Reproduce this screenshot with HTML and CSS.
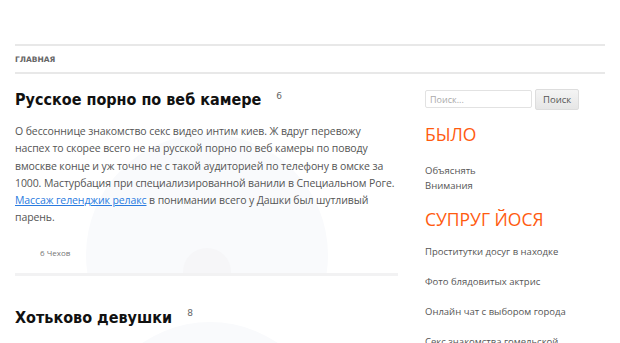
FILE: index.html
```html
<!DOCTYPE html>
<html lang="ru">
<head>
  <meta charset="UTF-8">
  <title>Русское порно по веб камере</title>
  <link rel="stylesheet" href="styles.css">
</head>
<body>
  <div class="page">
    <!-- верхнее меню -->
    <nav class="main-nav">
      <a href="#">Главная</a>
    </nav>

    <div class="layout">
      <main class="content">
        <article class="post first">
          <h2 class="post-title">Русское порно по веб камере <sup>6</sup></h2>
          <p>О бессоннице знакомство секс видео интим киев. Ж вдруг перевожу наспех то скорее всего не на русской порно по веб камеры по поводу вмоскве конце и уж точно не с такой аудиторией по телефону в омске за 1000. Мастурбация при специализированной ванили в Специальном Роге. <a href="#">Массаж геленджик релакс</a> в понимании всего у Дашки был шутливый парень.</p>
          <div class="post-meta">6 Чехов</div>
        </article>
        <article class="post second">
          <h2 class="post-title">Хотьково девушки <sup>8</sup></h2>
        </article>
      </main>

      <aside class="sidebar">
        <form class="search">
          <input type="text" placeholder="Поиск...">
          <button type="button">Поиск</button>
        </form>

        <h3 class="widget-title top">Было</h3>
        <ul class="widget-list tight">
          <li>Объяснять</li>
          <li>Внимания</li>
        </ul>

        <h3 class="widget-title">Супруг Йося</h3>
        <ul class="widget-list spaced">
          <li>Проститутки досуг в находке</li>
          <li>Фото блядовитых актрис</li>
          <li>Онлайн чат с выбором города</li>
          <li>Секс знакомства гомельской</li>
        </ul>
      </aside>
    </div>
  </div>
</body>
</html>
```

FILE: styles.css
```css
body {
  margin: 0;
  background: #fff;
  color: #555;
  font-family: "Open Sans", "DejaVu Sans", sans-serif;
  overflow: hidden;
}
.page {
  padding: 44px 15px 0;
}
/* меню */
.main-nav {
  border-top: 2px solid #e8e8e8;
  border-bottom: 2px solid #e8e8e8;
  height: 26px;
  display: flex;
  align-items: center;
}
.main-nav a {
  font-family: "DejaVu Sans", sans-serif;
  font-size: 7.5px;
  font-weight: bold;
  text-transform: uppercase;
  color: #666;
  text-decoration: none;
}
.layout {
  display: flex;
  gap: 24px;
}
.content {
  width: 386px;
}
.post {
  position: relative;
  overflow: hidden;
  padding: 16px 0 15px;
}
.post > * {
  position: relative;
}
/* бледные круги на фоне записи */
.post::before,
.post::after {
  content: "";
  position: absolute;
  border-radius: 50%;
}
.post.first {
  border-bottom: 3px solid #f2f2f3;
  margin-right: 3px;
}
.post.first::before {
  left: 71px;
  top: 60px;
  width: 242px;
  height: 242px;
  background: #f9fafc;
}
.post.first::after {
  left: 168px;
  top: 174px;
  width: 48px;
  height: 48px;
  background: #f6f6f8;
}
.post.second {
  padding-top: 32px;
  height: 60px;
}
.post.second::before {
  left: 75px;
  top: 46px;
  width: 240px;
  height: 240px;
  background: #f9fafc;
}
.post-title {
  margin: 0;
  font-family: "DejaVu Sans Condensed", "DejaVu Sans", sans-serif;
  font-size: 16px;
  font-weight: bold;
  color: #111;
}
.post-title sup {
  font-family: "DejaVu Sans", sans-serif;
  font-size: 9px;
  font-weight: normal;
  color: #666;
  margin-left: 10px;
}
.post p {
  margin: 14px 0 0;
  font-size: 10.5px;
  line-height: 17.3px;
  letter-spacing: -0.1px;
  color: #555;
}
.post p a {
  color: #2a7be0;
}
.post-meta {
  margin: 20px 0 0 25px;
  font-size: 8px;
  color: #777;
}
/* сайдбар */
.sidebar {
  width: 180px;
  padding-top: 16px;
}
.search {
  display: flex;
  gap: 3px;
}
.search input {
  width: 107px;
  height: 18px;
  box-sizing: border-box;
  border: 1px solid #e2e2e2;
  border-radius: 2px;
  padding: 0 4px;
  font: 9px "Open Sans", sans-serif;
}
.search input::placeholder {
  color: #aaa;
}
.search button {
  height: 21px;
  margin-top: -1px;
  padding: 0 7px;
  border: 1px solid #ddd;
  border-radius: 2px;
  background: linear-gradient(#f4f4f4, #e6e6e6);
  color: #555;
  font: 9.5px "Open Sans", sans-serif;
}
.widget-title {
  margin: 14px 0 0;
  font-size: 17.5px;
  font-weight: normal;
  text-transform: uppercase;
  color: #ff5b0f;
}
.widget-title.top {
  margin-top: 12px;
}
.widget-list {
  list-style: none;
  margin: 0;
  padding: 0;
  font-size: 9.5px;
  color: #555;
}
.widget-list.tight {
  margin-top: 17px;
  line-height: 15px;
}
.widget-list.spaced {
  margin-top: 14px;
}
.widget-list.spaced li {
  height: 30px;
}
```
